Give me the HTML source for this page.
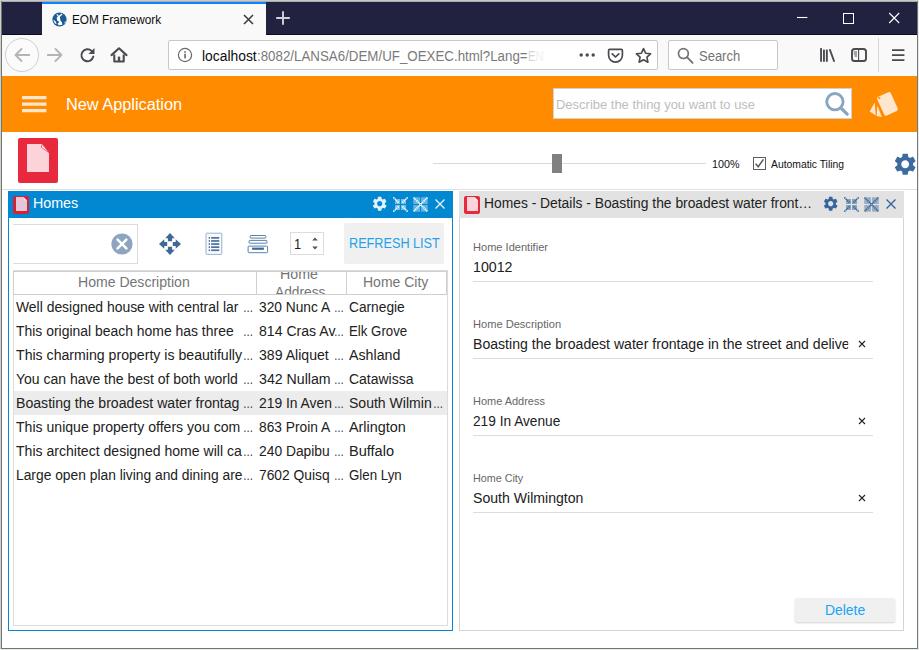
<!DOCTYPE html>
<html lang="en">
<head>
<meta charset="utf-8">
<title>EOM Framework</title>
<style>
*{box-sizing:border-box;margin:0;padding:0}
html,body{width:919px;height:650px;overflow:hidden;background:#fff}
body{font-family:"Liberation Sans",sans-serif;position:relative;color:#212121}
.abs{position:absolute}
.t{position:absolute;white-space:nowrap;line-height:1}
/* window frame */
#frame-l0{left:0;top:0;width:1px;height:650px;background:#cfcfcf}
#frame-l1{left:1px;top:1px;width:1px;height:648px;background:#6f7a6f}
#frame-t0{left:0;top:0;width:919px;height:1px;background:#c9c9c9}
#frame-t1{left:1px;top:1px;width:917px;height:1px;background:#a9aca9}
#frame-r{left:917px;top:1px;width:1px;height:648px;background:#6f7a6f}
#frame-r1{left:918px;top:0;width:1px;height:650px;background:#e9e9e9}
#frame-b{left:1px;top:648px;width:917px;height:1px;background:#6f7a6f}
#frame-b1{left:0;top:649px;width:919px;height:1px;background:#e9e9e9}
/* browser chrome */
#titlebar{left:2px;top:2px;width:915px;height:33px;background:#20223f}
#tab{left:42px;top:2px;width:224px;height:33px;background:#f9f9fa}
#tabline{left:42px;top:2px;width:224px;height:2px;background:#0a84ff}
#navbar{left:2px;top:35px;width:915px;height:41px;background:#f9f9fa}
#urlbar{left:168px;top:40px;width:490px;height:30px;background:#fff;border:1px solid #c8c8c8;border-radius:2px}
#searchbar{left:668px;top:40px;width:110px;height:30px;background:#fff;border:1px solid #c8c8c8;border-radius:2px}
#backbtn{left:5px;top:38px;width:34px;height:34px;border-radius:50%;border:1px solid #cfcfd0;background:#fbfbfb}
/* app */
#appbar{left:2px;top:76px;width:915px;height:56px;background:#ff8c00}
#appsearch{left:553px;top:88px;width:299px;height:31px;background:#fff;border:1px solid #d0d0d0}
#hline{left:2px;top:189px;width:915px;height:1px;background:#e0e0e0}
#redicon{left:18px;top:138px;width:40px;height:45px;background:#e8283d;border-radius:2px}
/* left panel */
#lp{left:8px;top:191px;width:445px;height:440px;border:1px solid #0288d1;background:#fff}
#lpt{left:8px;top:191px;width:445px;height:27px;background:#0288d1}
#lin{left:13px;top:224px;width:125px;height:40px;border:1px solid #dcdcdc;border-left:none;background:#fff}
#refresh{left:344px;top:223px;width:100px;height:41px;background:#f0f0f0;border-radius:2px}
#spin{left:290px;top:232px;width:34px;height:23px;border:1px solid #dcdcdc;background:#fff}
#grid{left:13px;top:270px;width:435px;height:356px;border:1px solid #dcdcdc;background:#fff}
#gh{left:13px;top:271px;width:434px;height:24px;border:1px solid #cfcfcf;background:#fff}
.gv{position:absolute;top:271px;width:1px;height:24px;background:#cfcfcf}
#sel{left:14px;top:391px;width:433px;height:24px;background:#ececec}
.row{position:absolute;font-size:14px;line-height:24px;height:24px;white-space:nowrap;color:#212121}
.hd{position:absolute;font-size:14px;color:#757575;white-space:nowrap;text-align:center}
/* right panel */
#rp{left:459px;top:191px;width:445px;height:440px;border:1px solid #d4d4d4;background:#fff}
#rpt{left:459px;top:191px;width:445px;height:27px;background:#e2e2e2}
.lbl{position:absolute;left:473px;font-size:11px;color:#666;white-space:nowrap;line-height:1}
.val{position:absolute;left:473.200px;font-size:14px;color:#212121;white-space:nowrap;line-height:20px;height:20px}
.ul{position:absolute;left:473px;width:400px;height:1px;background:#dcdcdc}
.x{position:absolute;left:858px;width:8px;height:8px}
#del{left:795px;top:598px;width:100px;height:24px;background:#f0f0f0;border-radius:2px;box-shadow:0 1px 2px rgba(0,0,0,.18)}
</style>
</head>
<body>
<!-- browser chrome -->
<div class="abs" id="titlebar"></div>
<div class="abs" style="left:2px;top:34px;width:915px;height:1px;background:#0b0c22"></div>
<div class="abs" id="tab"></div>
<div class="abs" id="tabline"></div>
<div class="abs" id="navbar"></div>

<!-- tab content -->
<svg class="abs" style="left:51.500px;top:11.500px" width="15" height="15" viewBox="0 0 15 15">
  <circle cx="7.500" cy="7.500" r="7.100" fill="#1d5b95"/>
  <path d="M5.100 1.900 L6.900 3.700 L9.700 1.600 L10.500 2.600 L7.800 5 L8.600 8.900 L9.900 10.200 L10.400 12.800 L6.900 13.300 L5.600 11.900 L7.300 9.700 L5.100 8.400 L4.700 5.800 L6 4.300 L4.300 2.800 Z" fill="#fff"/>
  <path d="M1.100 7.900 L3.400 8.900 L4.700 12 L3 11.500 Z" fill="#fff"/>
  <path d="M12.100 10.700 L13.800 8.800 L13.100 11.500 Z" fill="#e8eef5"/>
</svg>
<div class="t" id="tabtitle" style="left:72.13px;top:14px;font-size:12px;color:#0c0c0d;transform-origin:0 0;transform:scaleX(0.9821)">EOM Framework</div>
<svg class="abs" style="left:243px;top:14px" width="11" height="11" viewBox="0 0 11 11"><path d="M1 1 L10 10 M10 1 L1 10" stroke="#3a3a3e" stroke-width="1.500" fill="none"/></svg>
<svg class="abs" style="left:276px;top:11px" width="14" height="14" viewBox="0 0 14 14"><path d="M7 0.200 V13.800 M0.200 7 H13.800" stroke="#d2d2df" stroke-width="1.900" fill="none"/></svg>
<!-- window controls -->
<svg class="abs" style="left:797px;top:12px" width="104" height="12" viewBox="0 0 104 12">
  <path d="M0 5.500 H10.400" stroke="#fff" stroke-width="1.100"/>
  <rect x="46.500" y="1.500" width="10" height="10" fill="none" stroke="#fff" stroke-width="1"/>
  <path d="M92.200 1 L102.200 11 M102.200 1 L92.200 11" stroke="#fff" stroke-width="1.100"/>
</svg>

<!-- nav bar -->
<div class="abs" id="backbtn"></div>
<svg class="abs" style="left:14px;top:48px" width="16" height="14" viewBox="0 0 16 14"><path d="M15.5 7 H1.5 M7.5 1 L1.5 7 L7.5 13" stroke="#b4b4b6" stroke-width="1.8" fill="none" stroke-linecap="round" stroke-linejoin="round"/></svg>
<svg class="abs" style="left:47px;top:48px" width="16" height="14" viewBox="0 0 16 14"><path d="M0.5 7 H14.5 M8.5 1 L14.5 7 L8.5 13" stroke="#b4b4b6" stroke-width="1.8" fill="none" stroke-linecap="round" stroke-linejoin="round"/></svg>
<svg class="abs" style="left:79px;top:47px" width="17" height="16" viewBox="0 0 17 16"><path d="M12.600 3.900 A6 6 0 1 0 14.300 9.600" stroke="#4a4a4f" stroke-width="2" fill="none" stroke-linecap="round"/><path d="M15.500 0.900 V7 H9.400 Z" fill="#4a4a4f"/></svg>
<svg class="abs" style="left:110px;top:47px" width="18" height="16" viewBox="0 0 18 16"><path d="M1.500 8.100 L9 1.300 L16.500 8.100" stroke="#4a4a4f" stroke-width="2.100" fill="none" stroke-linejoin="round" stroke-linecap="round"/><path d="M4.300 7.500 V14.500 H13.700 V7.500" stroke="#4a4a4f" stroke-width="2.100" fill="none" stroke-linejoin="round"/><rect x="7.800" y="9.600" width="2.400" height="4.600" fill="#4a4a4f"/></svg>
<div class="abs" id="urlbar"></div>
<svg class="abs" style="left:177px;top:47px" width="16" height="16" viewBox="0 0 16 16"><circle cx="8" cy="8" r="6.6" fill="none" stroke="#6b6b6e" stroke-width="1.2"/><rect x="7.3" y="6.8" width="1.5" height="4.6" fill="#5a5a5e"/><rect x="7.3" y="4.2" width="1.5" height="1.6" fill="#5a5a5e"/></svg>
<div class="t" id="url1" style="left:201.56px;top:49px;font-size:14px;color:#0c0c0d;transform-origin:0 0;transform:scaleX(0.9890)">localhost</div>
<div class="t" id="url2" style="left:256.52px;top:49px;font-size:14px;color:#7a7a7a;transform-origin:0 0;transform:scaleX(0.9515)">:8082/LANSA6/DEM/UF_OEXEC.html?Lang=</div>
<div class="t" id="url3" style="left:527.54px;top:49px;font-size:14px;color:#d4d4d4;transform-origin:0 0;transform:scaleX(0.8105)">E<span style="color:#f0f0f0">N</span></div>
<svg class="abs" style="left:579px;top:52px" width="17" height="6" viewBox="0 0 17 6"><circle cx="2.2" cy="3" r="1.7" fill="#4a4a4f"/><circle cx="8.2" cy="3" r="1.7" fill="#4a4a4f"/><circle cx="14.2" cy="3" r="1.7" fill="#4a4a4f"/></svg>
<svg class="abs" style="left:607px;top:48px" width="17" height="16" viewBox="0 0 17 16"><path d="M2.6 1.4 H14.4 Q15.4 1.4 15.4 2.4 V7.2 A6.9 6.9 0 0 1 1.6 7.2 V2.4 Q1.6 1.4 2.6 1.4 Z" fill="none" stroke="#4a4a4f" stroke-width="1.7"/><path d="M5.2 5.8 L8.5 9 L11.8 5.8" fill="none" stroke="#4a4a4f" stroke-width="1.7" stroke-linecap="round" stroke-linejoin="round"/></svg>
<svg class="abs" style="left:635px;top:47px" width="17" height="17" viewBox="0 0 17 17"><path d="M8.5 1.6 L10.6 6.2 L15.6 6.8 L11.9 10.2 L12.9 15.2 L8.5 12.7 L4.1 15.2 L5.1 10.2 L1.4 6.8 L6.4 6.2 Z" fill="none" stroke="#4a4a4f" stroke-width="1.6" stroke-linejoin="round"/></svg>
<div class="abs" id="searchbar"></div>
<svg class="abs" style="left:677px;top:47px" width="17" height="17" viewBox="0 0 17 17"><circle cx="6.4" cy="6.6" r="4.9" fill="none" stroke="#737373" stroke-width="1.7"/><path d="M10 10.2 L15.6 15.8" stroke="#737373" stroke-width="1.9" stroke-linecap="round"/></svg>
<div class="t" id="searchtxt" style="left:699.20px;top:49px;font-size:14px;color:#737373;transform-origin:0 0;transform:scaleX(0.9274)">Search</div>
<svg class="abs" style="left:819px;top:48px" width="17" height="14" viewBox="0 0 17 14"><rect x="1.1" y="0" width="1.9" height="13.7" rx=".5" fill="#4a4a4f"/><rect x="4" y="1.4" width="1.9" height="12.3" rx=".5" fill="#4a4a4f"/><rect x="6.9" y="1.4" width="1.9" height="12.3" rx=".5" fill="#4a4a4f"/><path d="M11 2 L15 13" stroke="#4a4a4f" stroke-width="1.9" stroke-linecap="round" fill="none"/></svg>
<svg class="abs" style="left:850px;top:47px" width="18" height="16" viewBox="0 0 18 16"><rect x="2" y="2" width="14" height="12" rx="2.6" fill="none" stroke="#4a4a4f" stroke-width="1.9"/><path d="M8.6 2 V14" stroke="#4a4a4f" stroke-width="1.1"/><path d="M3.8 5 H7 M3.8 7 H7 M4.6 9 H7" stroke="#4a4a4f" stroke-width="1"/></svg>
<div class="abs" style="left:878px;top:38px;width:1px;height:34px;background:#d7d7db"></div>
<svg class="abs" style="left:892px;top:48px" width="13" height="14" viewBox="0 0 13 14"><path d="M0 2.2 H12.4 M0 7.2 H12.4 M0 12.2 H12.4" stroke="#4a4a4f" stroke-width="1.7"/></svg>

<!-- app bar -->
<div class="abs" id="appbar"></div>
<svg class="abs" style="left:21.500px;top:95.800px" width="25" height="17" viewBox="0 0 25 17"><path d="M0 1.600 H24.400 M0 8.100 H24.400 M0 14.650 H24.400" stroke="#ffe6cc" stroke-width="3.100"/></svg>
<div class="t" id="apptitle" style="left:65.82px;top:97px;font-size:16px;color:#fff;transform-origin:0 0;transform:scaleX(1.0201)">New Application</div>
<div class="abs" id="appsearch"></div>
<div class="t" id="appph" style="left:555.85px;top:98px;font-size:13.5px;color:#bdbdbd;transform-origin:0 0;transform:scaleX(0.9610)">Describe the thing you want to use</div>
<svg class="abs" style="left:820px;top:88px" width="32" height="31" viewBox="0 0 32 31"><circle cx="14.9" cy="13.7" r="8.2" fill="none" stroke="#8aa5c1" stroke-width="2.9"/><path d="M21 20 L27.200 26.100" stroke="#8aa5c1" stroke-width="3.2" stroke-linecap="round"/></svg>
<svg class="abs" style="left:866px;top:88px" width="36" height="32" viewBox="0 0 36 32">
  <path d="M8.700 14.400 L3.700 23.600 L9.700 27.300 Z" fill="#ffe6cc"/>
  <path d="M11.300 17.400 L10.600 27.900 L15.900 29 Z" fill="#ffe6cc"/>
  <g transform="rotate(-24.500 21.500 15.900)"><rect x="14.050" y="5.600" width="14.900" height="20.600" rx="2" fill="#ffe6cc"/></g>
  <circle cx="13.300" cy="10.100" r="1.150" fill="#ff8c00"/>
</svg>

<!-- toolbar row -->
<div class="abs" id="redicon"></div>
<svg class="abs" style="left:27px;top:144px" width="22" height="28" viewBox="0 0 22 28"><path d="M0 0 H15 L22 8.600 V28 H0 Z" fill="#fbd3d8"/><path d="M15.200 0.300 L21.900 8.500 L14.200 3.200 Z" fill="#fff" stroke="#e8283d" stroke-width=".700"/></svg>
<div class="abs" style="left:433px;top:163px;width:273px;height:1px;background:#d9d9d9"></div>
<div class="abs" style="left:552px;top:154px;width:10px;height:19px;background:#808080"></div>
<div class="t" id="pct" style="left:711.60px;top:159px;font-size:11.5px;color:#111;transform-origin:0 0;transform:scaleX(0.9319)">100%</div>
<div class="abs" style="left:753px;top:157px;width:13px;height:13px;border:1px solid #5e5e5e;background:#fff"></div>
<svg class="abs" style="left:754px;top:158px" width="11" height="11" viewBox="0 0 11 11"><path d="M1.600 5.600 L4.200 8.800 L9.400 1.400" stroke="#555" stroke-width="1.500" fill="none"/></svg>
<div class="t" id="autot" style="left:771.49px;top:158.500px;font-size:11px;color:#111;transform-origin:0 0;transform:scaleX(0.9402)">Automatic Tiling</div>
<svg class="abs" id="biggear" style="left:891.800px;top:150.800px" width="26.400" height="26.400" viewBox="0 0 24 24"><path fill="#3d6b9e" d="M19.14 12.94c.04-.3.06-.61.06-.94 0-.32-.02-.64-.07-.94l2.03-1.58a.49.49 0 0 0 .12-.61l-1.92-3.32a.488.488 0 0 0-.59-.22l-2.39.96c-.5-.38-1.03-.7-1.62-.94l-.36-2.54a.484.484 0 0 0-.48-.41h-3.84c-.24 0-.43.17-.47.41l-.36 2.54c-.59.24-1.13.57-1.62.94l-2.39-.96c-.22-.08-.47 0-.59.22L2.74 8.87c-.12.21-.08.47.12.61l2.03 1.58c-.05.3-.09.63-.09.94s.02.64.07.94l-2.03 1.58a.49.49 0 0 0-.12.61l1.92 3.32c.12.22.37.29.59.22l2.39-.96c.5.38 1.03.7 1.62.94l.36 2.54c.05.24.24.41.48.41h3.84c.24 0 .44-.17.47-.41l.36-2.54c.59-.24 1.13-.56 1.62-.94l2.39.96c.22.08.47 0 .59-.22l1.92-3.32c.12-.22.07-.47-.12-.61l-2.01-1.58zM12 15.6c-1.98 0-3.600-1.620-3.600-3.600s1.620-3.600 3.600-3.600 3.600 1.620 3.600 3.600-1.620 3.600-3.600 3.600z"/></svg>
<div class="abs" id="hline"></div>

<!-- left panel -->
<div class="abs" id="lp"></div>
<div class="abs" id="lpt"></div>
<div class="abs" style="left:13px;top:196px;width:16px;height:18px;background:#d81f3a;border-radius:2px"></div>
<svg class="abs" style="left:15.600px;top:197px" width="11.200" height="14" viewBox="0 0 11.200 14"><path d="M0 0 H7.400 L11.200 3.800 V14 H0 Z" fill="#e6c6d4"/><path d="M7.400 0 L11.200 3.800 L8 3.200 Z" fill="#f8eaf0"/></svg>
<div class="t" id="lptitle" style="left:32.75px;top:196px;font-size:14px;color:#fff;transform-origin:0 0;transform:scaleX(1.0181)">Homes</div>
<svg class="abs" style="left:371.45px;top:195.300px" width="17.400" height="17.400" viewBox="0 0 24 24"><path fill="#e4f2fb" d="M19.14 12.94c.04-.3.06-.61.06-.94 0-.32-.02-.64-.07-.94l2.03-1.58a.49.49 0 0 0 .12-.61l-1.92-3.32a.488.488 0 0 0-.59-.22l-2.39.96c-.5-.38-1.03-.7-1.62-.94l-.36-2.54a.484.484 0 0 0-.48-.41h-3.84c-.24 0-.43.17-.47.41l-.36 2.54c-.59.24-1.13.57-1.62.94l-2.39-.96c-.22-.08-.47 0-.59.22L2.74 8.87c-.12.21-.08.47.12.61l2.03 1.58c-.05.3-.09.63-.09.94s.02.64.07.94l-2.030 1.580a.49.49 0 0 0-.12.61l1.920 3.320c.12.22.37.29.59.22l2.390-.96c.5.38 1.030.7 1.620.94l.36 2.540c.05.24.24.41.48.41h3.840c.24 0 .44-.17.47-.41l.36-2.540c.59-.24 1.130-.56 1.620-.94l2.390.96c.22.08.47 0 .59-.22l1.920-3.320c.12-.22.07-.47-.12-.61l-2.010-1.580zM12 15.600c-1.980 0-3.600-1.620-3.600-3.600s1.620-3.600 3.600-3.600 3.600 1.620 3.600 3.600-1.620 3.600-3.600 3.600z"/></svg>
<svg class="abs" style="left:393.00px;top:196.500px" width="15" height="15" viewBox="0 0 15 15"><rect x="2" y="2" width="11" height="11" fill="#ffffff" fill-opacity="0.45"/><path d="M7.5 1.500 V13.500 M1.500 7.500 H13.500" stroke="#0288d1" stroke-width="1"/><path d="M0.400 0.400 L5.600 5.600 M14.600 0.400 L9.400 5.600 M0.400 14.600 L5.600 9.400 M14.600 14.600 L9.400 9.400" stroke="#ffffff" stroke-width="1.700" stroke-dasharray="1.300 0.700" fill="none"/></svg>
<svg class="abs" style="left:412.80px;top:196.500px" width="15" height="15" viewBox="0 0 15 15"><rect x="0.300" y="0.300" width="14.400" height="14.400" fill="#ffffff" fill-opacity="0.38"/><path d="M7.500 0 V15 M0 7.500 H15" stroke="#0288d1" stroke-width="1"/><path d="M0.600 0.600 L14.400 14.400 M14.400 0.600 L0.600 14.400" stroke="#ffffff" stroke-width="1.700" stroke-dasharray="1.300 0.700" fill="none"/></svg>
<svg class="abs" style="left:435.20px;top:199.100px" width="10" height="10" viewBox="0 0 10 10"><path d="M0.500 0.500 L9.500 9.500 M9.500 0.500 L0.500 9.500" stroke="#e4f2fb" stroke-width="1.400" fill="none"/></svg>

<div class="abs" id="lin"></div>
<svg class="abs" style="left:111px;top:233px" width="22" height="22" viewBox="0 0 22 22"><circle cx="11" cy="11" r="10.6" fill="#8da5bf"/><path d="M6.6 6.6 L15.4 15.4 M15.4 6.6 L6.6 15.4" stroke="#fff" stroke-width="2.6" stroke-linecap="round"/></svg>
<svg class="abs" style="left:159px;top:232.900px" width="22" height="22" viewBox="0 0 22 22"><g fill="#3f6894"><path d="M11 0 L15.800 5.300 H13.100 V8.200 H8.900 V5.300 H6.200 Z"/><path d="M11 22 L15.800 16.700 H13.100 V13.800 H8.900 V16.700 H6.200 Z"/><path d="M0 11 L5.300 6.200 V8.900 H8.200 V13.100 H5.300 V15.800 Z"/><path d="M22 11 L16.700 6.200 V8.900 H13.800 V13.100 H16.700 V15.800 Z"/></g></svg>
<svg class="abs" style="left:205px;top:232px" width="18" height="24" viewBox="0 0 18 24"><rect x="1" y="1.200" width="15.800" height="21.200" rx=".8" fill="#f7f9fc" stroke="#9ab0cc" stroke-width="1"/><g fill="#4b739f"><rect x="3.700" y="5" width="1.300" height="1.700"/><rect x="6.100" y="5" width="8.200" height="1.700"/><rect x="3.700" y="8.100" width="1.300" height="1.700"/><rect x="6.100" y="8.100" width="8.200" height="1.700"/><rect x="3.700" y="11.200" width="1.300" height="1.700"/><rect x="6.100" y="11.200" width="8.200" height="1.700"/><rect x="3.700" y="14.300" width="1.300" height="1.700"/><rect x="6.100" y="14.300" width="8.200" height="1.700"/><rect x="3.700" y="17.400" width="1.300" height="1.700"/><rect x="6.100" y="17.400" width="8.200" height="1.700"/></g></svg>
<svg class="abs" style="left:247px;top:234px" width="22" height="20" viewBox="0 0 22 20"><g fill="#fff" stroke="#5b82af" stroke-width="1"><rect x="3.200" y="1.500" width="15.600" height="2.600" rx=".6"/><rect x="2.100" y="6.400" width="17.800" height="2.800" rx=".6"/><rect x="1.100" y="12.100" width="19.500" height="6.600" rx=".8"/></g><rect x="5.100" y="13.600" width="11.800" height="2.200" fill="#3f6894"/></svg>
<div class="abs" id="spin"></div>
<div class="t" id="spin1" style="left:293.96px;top:237px;font-size:14px;color:#212121;transform-origin:0 0;transform:scaleX(0.9158)">1</div>
<svg class="abs" style="left:311px;top:236px" width="8" height="15" viewBox="0 0 8 15"><path d="M4 1.4 L6.8 4.6 H1.2 Z M4 13.6 L6.8 10.4 H1.2 Z" fill="#555"/></svg>
<div class="abs" id="refresh"></div>
<div class="t" id="refreshtxt" style="left:348.55px;top:236px;font-size:14px;color:#1fa2ea;transform-origin:0 0;transform:scaleX(0.9048)">REFRESH LIST</div>

<div class="abs" id="grid"></div>
<div class="abs" id="sel"></div>
<div class="abs" id="gh"></div>
<div class="gv" style="left:256px"></div>
<div class="gv" style="left:346px"></div>
<div class="t hd2" id="h1" style="left:78.36px;top:275px;font-size:14px;color:#757575;transform-origin:0 0;transform:scaleX(1.0040)">Home Description</div>
<div class="abs" style="left:257px;top:272px;width:89px;height:22px;overflow:hidden">
<div class="t hd2" id="h2a" style="left:22.80px;top:-5px;font-size:14px;color:#757575;transform-origin:0 0;transform:scaleX(1.0138)">Home</div>
<div class="t hd2" id="h2b" style="left:18.43px;top:13px;font-size:14px;color:#757575;transform-origin:0 0;transform:scaleX(0.9806)">Address</div>
</div>
<div class="t hd2" id="h3" style="left:363.06px;top:275px;font-size:14px;color:#757575;transform-origin:0 0;transform:scaleX(0.9989)">Home City</div>

<div class="row r1" id="r1a" style="left:16.00px;top:295px;transform-origin:0 0;transform:scaleX(0.9933)">Well designed house with central lar</div>
<div class="row r1" id="r1b" style="left:16.00px;top:319px;transform-origin:0 0;transform:scaleX(0.9952)">This original beach home has three</div>
<div class="row r1" id="r1c" style="left:16.00px;top:343px;transform-origin:0 0;transform:scaleX(1.0086)">This charming property is beautifully</div>
<div class="row r1" id="r1d" style="left:16.00px;top:367px;transform-origin:0 0;transform:scaleX(0.9988)">You can have the best of both world</div>
<div class="row r1" id="r1e" style="left:16.00px;top:391px;transform-origin:0 0;transform:scaleX(1.0074)">Boasting the broadest water frontag</div>
<div class="row r1" id="r1f" style="left:16.00px;top:415px;transform-origin:0 0;transform:scaleX(1.0052)">This unique property offers you com</div>
<div class="row r1" id="r1g" style="left:16.00px;top:439px;transform-origin:0 0;transform:scaleX(1.0041)">This architect designed home will ca</div>
<div class="row r1" id="r1h" style="left:16.00px;top:463px;transform-origin:0 0;transform:scaleX(0.9864)">Large open plan living and dining are</div>

<div class="row e1" id="e1a" style="left:243.26px;top:295px;transform-origin:0 0;transform:scaleX(0.7297)">…</div>
<div class="row e1" id="e1b" style="left:243.26px;top:319px;transform-origin:0 0;transform:scaleX(0.7297)">…</div>
<div class="row e1" id="e1c" style="left:243.26px;top:343px;transform-origin:0 0;transform:scaleX(0.7297)">…</div>
<div class="row e1" id="e1d" style="left:243.26px;top:367px;transform-origin:0 0;transform:scaleX(0.7297)">…</div>
<div class="row e1" id="e1e" style="left:243.26px;top:391px;transform-origin:0 0;transform:scaleX(0.7297)">…</div>
<div class="row e1" id="e1f" style="left:243.26px;top:415px;transform-origin:0 0;transform:scaleX(0.7297)">…</div>
<div class="row e1" id="e1g" style="left:243.26px;top:439px;transform-origin:0 0;transform:scaleX(0.7297)">…</div>
<div class="row e1" id="e1h" style="left:243.26px;top:463px;transform-origin:0 0;transform:scaleX(0.7297)">…</div>

<div class="row r2" id="r2a" style="left:259.00px;top:295px;transform-origin:0 0;transform:scaleX(0.9826)">320 Nunc A</div>
<div class="row r2" id="r2b" style="left:259.00px;top:319px;transform-origin:0 0;transform:scaleX(1.0056)">814 Cras Av</div>
<div class="row r2" id="r2c" style="left:259.00px;top:343px;transform-origin:0 0;transform:scaleX(1.0062)">389 Aliquet</div>
<div class="row r2" id="r2d" style="left:259.00px;top:367px;transform-origin:0 0;transform:scaleX(1.0120)">342 Nullam</div>
<div class="row r2" id="r2e" style="left:259.00px;top:391px;transform-origin:0 0;transform:scaleX(0.9882)">219 In Aven</div>
<div class="row r2" id="r2f" style="left:259.00px;top:415px;transform-origin:0 0;transform:scaleX(0.9826)">863 Proin A</div>
<div class="row r2" id="r2g" style="left:259.00px;top:439px;transform-origin:0 0;transform:scaleX(0.9875)">240 Dapibu</div>
<div class="row r2" id="r2h" style="left:259.00px;top:463px;transform-origin:0 0;transform:scaleX(0.9871)">7602 Quisq</div>

<div class="row e2" id="e2a" style="left:333.70px;top:295px;transform-origin:0 0;transform:scaleX(0.7105)">…</div>
<div class="row e2" id="e2b" style="left:333.70px;top:319px;transform-origin:0 0;transform:scaleX(0.7105)">…</div>
<div class="row e2" id="e2c" style="left:333.70px;top:343px;transform-origin:0 0;transform:scaleX(0.7105)">…</div>
<div class="row e2" id="e2d" style="left:333.70px;top:367px;transform-origin:0 0;transform:scaleX(0.7105)">…</div>
<div class="row e2" id="e2e" style="left:333.70px;top:391px;transform-origin:0 0;transform:scaleX(0.7105)">…</div>
<div class="row e2" id="e2f" style="left:333.70px;top:415px;transform-origin:0 0;transform:scaleX(0.7105)">…</div>
<div class="row e2" id="e2g" style="left:333.70px;top:439px;transform-origin:0 0;transform:scaleX(0.7105)">…</div>
<div class="row e2" id="e2h" style="left:333.70px;top:463px;transform-origin:0 0;transform:scaleX(0.7105)">…</div>

<div class="row r3" id="r3a" style="left:348.60px;top:295px;transform-origin:0 0;transform:scaleX(0.9804)">Carnegie</div>
<div class="row r3" id="r3b" style="left:348.60px;top:319px;transform-origin:0 0;transform:scaleX(0.9474)">Elk Grove</div>
<div class="row r3" id="r3c" style="left:348.60px;top:343px;transform-origin:0 0;transform:scaleX(1.0148)">Ashland</div>
<div class="row r3" id="r3d" style="left:348.60px;top:367px;transform-origin:0 0;transform:scaleX(0.9979)">Catawissa</div>
<div class="row r3" id="r3e" style="left:348.60px;top:391px;transform-origin:0 0;transform:scaleX(1.0026)">South Wilmin</div>
<div class="row r3" id="r3f" style="left:348.60px;top:415px;transform-origin:0 0;transform:scaleX(1.0266)">Arlington</div>
<div class="row r3" id="r3g" style="left:348.60px;top:439px;transform-origin:0 0;transform:scaleX(1.0393)">Buffalo</div>
<div class="row r3" id="r3h" style="left:348.60px;top:463px;transform-origin:0 0;transform:scaleX(0.9490)">Glen Lyn</div>
<div class="row e3" id="e3a" style="left:433.26px;top:391px;transform-origin:0 0;transform:scaleX(0.7297)">…</div>

<!-- right panel -->
<div class="abs" id="rp"></div>
<div class="abs" id="rpt"></div>
<div class="abs" style="left:464px;top:196px;width:16px;height:18px;background:#e8283d;border-radius:2px"></div>
<svg class="abs" style="left:466.500px;top:197px" width="11.200" height="14" viewBox="0 0 11.200 14"><path d="M0 0 H7.400 L11.200 3.800 V14 H0 Z" fill="#fbd3d8"/><path d="M7.400 0 L11.200 3.800 L8 3.200 Z" fill="#fff"/></svg>
<div class="t" id="rptitle" style="left:483.57px;top:196px;font-size:14px;color:#212121;transform-origin:0 0;transform:scaleX(0.9878)">Homes - Details - Boasting the broadest water front…</div>
<svg class="abs" style="left:822.25px;top:195.300px" width="17.400" height="17.400" viewBox="0 0 24 24"><path fill="#35659a" d="M19.14 12.94c.04-.3.06-.61.06-.94 0-.32-.02-.64-.07-.94l2.03-1.58a.49.49 0 0 0 .12-.61l-1.92-3.32a.488.488 0 0 0-.59-.22l-2.39.96c-.5-.38-1.03-.7-1.62-.94l-.36-2.54a.484.484 0 0 0-.48-.41h-3.84c-.24 0-.43.17-.47.41l-.36 2.54c-.59.24-1.13.57-1.62.94l-2.39-.96c-.22-.08-.47 0-.59.22L2.74 8.87c-.12.21-.08.47.12.61l2.03 1.58c-.05.3-.09.63-.09.94s.02.64.07.94l-2.030 1.580a.49.49 0 0 0-.12.61l1.920 3.320c.12.22.37.29.59.22l2.390-.96c.5.38 1.030.7 1.620.94l.36 2.540c.05.24.24.41.48.41h3.840c.24 0 .44-.17.47-.41l.36-2.540c.59-.24 1.130-.56 1.620-.94l2.390.96c.22.08.47 0 .59-.22l1.920-3.320c.12-.22.07-.47-.12-.61l-2.010-1.580zM12 15.600c-1.980 0-3.600-1.620-3.600-3.600s1.620-3.600 3.600-3.600 3.600 1.620 3.600 3.600-1.620 3.600-3.600 3.600z"/></svg>
<svg class="abs" style="left:843.80px;top:196.500px" width="15" height="15" viewBox="0 0 15 15"><rect x="2" y="2" width="11" height="11" fill="#35659a" fill-opacity="0.5"/><path d="M7.5 1.500 V13.500 M1.500 7.500 H13.500" stroke="#e2e2e2" stroke-width="1"/><path d="M0.400 0.400 L5.600 5.600 M14.600 0.400 L9.400 5.600 M0.400 14.600 L5.600 9.400 M14.600 14.600 L9.400 9.400" stroke="#35659a" stroke-width="1.700" stroke-dasharray="1.300 0.700" fill="none"/></svg>
<svg class="abs" style="left:863.60px;top:196.500px" width="15" height="15" viewBox="0 0 15 15"><rect x="0.300" y="0.300" width="14.400" height="14.400" fill="#35659a" fill-opacity="0.42"/><path d="M7.500 0 V15 M0 7.500 H15" stroke="#e2e2e2" stroke-width="1"/><path d="M0.600 0.600 L14.400 14.400 M14.400 0.600 L0.600 14.400" stroke="#35659a" stroke-width="1.700" stroke-dasharray="1.300 0.700" fill="none"/></svg>
<svg class="abs" style="left:886.00px;top:199.100px" width="10" height="10" viewBox="0 0 10 10"><path d="M0.500 0.500 L9.500 9.500 M9.500 0.500 L0.500 9.500" stroke="#35659a" stroke-width="1.400" fill="none"/></svg>

<div class="lbl" id="l1" style="left:473.20px;top:242px;transform-origin:0 0;transform:scaleX(1.0050)">Home Identifier</div>
<div class="val" id="v1" style="left:473.20px;top:257px;transform-origin:0 0;transform:scaleX(1.0147)">10012</div>
<div class="ul" style="top:281px"></div>

<div class="lbl" id="l2" style="left:473.20px;top:319px;transform-origin:0 0;transform:scaleX(1.0074)">Home Description</div>
<div class="val" id="v2" style="top:334px;width:373.300px;overflow:hidden;transform-origin:0 0;transform:scaleX(1.0060)">Boasting the broadest water frontage in the street and delivering</div>
<div class="ul" style="top:358px"></div>
<svg class="x" style="top:340px" viewBox="0 0 8 8"><path d="M1 1 L7 7 M7 1 L1 7" stroke="#222" stroke-width="1.1"/></svg>

<div class="lbl" id="l3" style="left:473.20px;top:396px;transform-origin:0 0;transform:scaleX(0.9962)">Home Address</div>
<div class="val" id="v3" style="left:473.20px;top:411px;transform-origin:0 0;transform:scaleX(0.9783)">219 In Avenue</div>
<div class="ul" style="top:435px"></div>
<svg class="x" style="top:417px" viewBox="0 0 8 8"><path d="M1 1 L7 7 M7 1 L1 7" stroke="#222" stroke-width="1.1"/></svg>

<div class="lbl" id="l4" style="left:473.20px;top:473px;transform-origin:0 0;transform:scaleX(0.9774)">Home City</div>
<div class="val" id="v4" style="left:473.20px;top:488px;transform-origin:0 0;transform:scaleX(1.0062)">South Wilmington</div>
<div class="ul" style="top:512px"></div>
<svg class="x" style="top:494px" viewBox="0 0 8 8"><path d="M1 1 L7 7 M7 1 L1 7" stroke="#222" stroke-width="1.1"/></svg>

<div class="abs" id="del"></div>
<div class="t" id="deltxt" style="left:825.07px;top:603px;font-size:14px;color:#18a5f3;transform-origin:0 0;transform:scaleX(0.9929)">Delete</div>

<!-- window frame (on top) -->
<div class="abs" id="frame-t0"></div><div class="abs" id="frame-l0"></div>
<div class="abs" id="frame-t1"></div><div class="abs" id="frame-l1"></div>
<div class="abs" id="frame-r"></div><div class="abs" id="frame-r1"></div>
<div class="abs" id="frame-b"></div><div class="abs" id="frame-b1"></div>
</body>
</html>
